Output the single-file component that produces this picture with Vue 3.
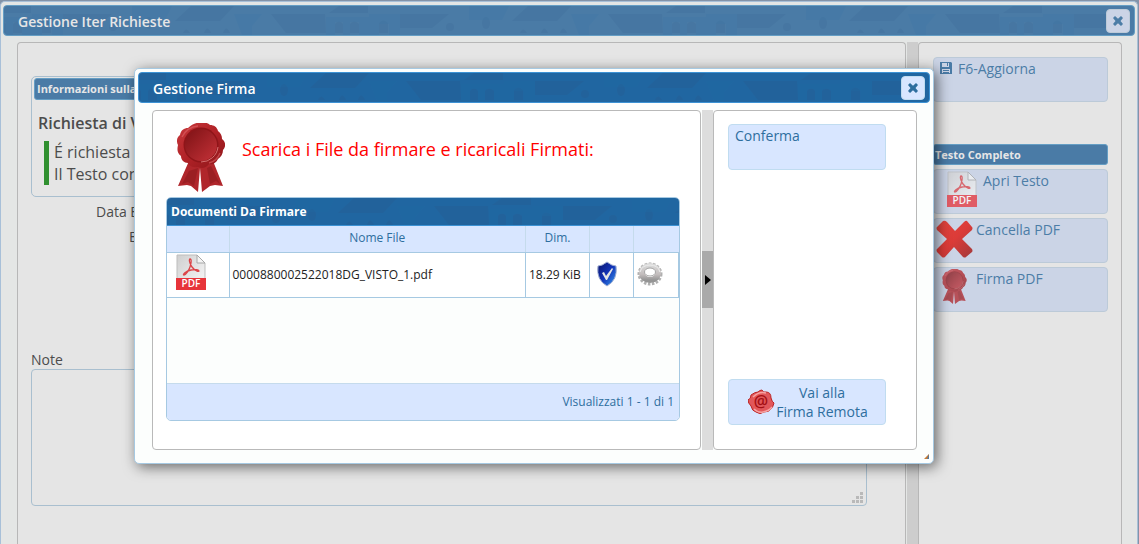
<script setup>
import { ref } from 'vue'

const note = ref('')
const documents = [{ name: '0000880002522018DG_VISTO_1.pdf', size: '18.29 KiB' }]
</script>

<template>
  <div class="page">
    <svg class="defs" aria-hidden="true">
      <defs>
        <pattern id="tiles" width="337" height="32" patternUnits="userSpaceOnUse" patternTransform="translate(-72 0)">
          <g fill="#2d5584" fill-opacity=".4">
            <path d="M2 8H56L57 27H17Z" />
            <path d="M70 0H99V7H60Z" />
            <path d="M66 27V18q4-5 8 0V27ZM81 27V18q4-5 9 0V27ZM110 27V17q4-5 9 0V27Z" />
            <path d="M131 8H180L163 22H131Z" />
            <circle cx="181" cy="21" r="4" />
            <ellipse cx="217" cy="17" rx="4" ry="6" />
            <path d="M259 0H302L288 15H243Z" />
            <path d="M251 27q3-7 7 0ZM272 27q3-9 7 0ZM291 27q3-9 7 0Z" />
          </g>
          <g fill="#1f6fa8" fill-opacity=".3">
            <path d="M57 11H100V8H131V29H120V18H110V29H90V16H81V29H74V16H66V29H57Z" />
            <path d="M200 0H240L233 14H200ZM302 8H330L320 20V29H310Z" />
          </g>
        </pattern>
        <linearGradient id="wax" x1="0" y1="0" x2="1" y2="1">
          <stop offset="0" stop-color="#c8393c" /><stop offset=".5" stop-color="#b02227" /><stop offset="1" stop-color="#8c1519" />
        </linearGradient>
        <linearGradient id="waxIn" x1="0" y1="0" x2="1" y2="1">
          <stop offset="0" stop-color="#7d1215" /><stop offset="1" stop-color="#c53238" />
        </linearGradient>
        <linearGradient id="paper" x1="0" y1="0" x2="1" y2="1">
          <stop offset="0" stop-color="#cfcfcf" /><stop offset="1" stop-color="#fafafa" />
        </linearGradient>
        <linearGradient id="shield" x1="0" y1="0" x2="1" y2="1">
          <stop offset="0" stop-color="#0a1268" /><stop offset=".5" stop-color="#1233b8" /><stop offset="1" stop-color="#3aa0ee" />
        </linearGradient>
        <linearGradient id="steel" x1="0" y1="0" x2="0" y2="1">
          <stop offset="0" stop-color="#d8d8d8" /><stop offset=".6" stop-color="#c2bcbc" /><stop offset="1" stop-color="#959595" />
        </linearGradient>
        <linearGradient id="cross" x1="0" y1="0" x2="1" y2="1">
          <stop offset="0" stop-color="#e0463f" /><stop offset=".5" stop-color="#dc3b38" /><stop offset="1" stop-color="#a23a3c" />
        </linearGradient>
        <symbol id="seal" viewBox="0 0 48 69">
          <path d="M12 38 1 63l9-1 4 1 7 6 2-24 2 24 8-6 5-1 8 1-10-25Z" fill="#b0262b" />
          <path d="m12 48-7 13 6-2 6 4 4-18ZM30 45l3 16 6-3 4 3-9-18Z" fill="#8e1a1e" opacity=".6" />
          <path d="M24 0c4-1 7 0 9 2 4 0 7 2 8 6 3 2 4 5 4 8 4 3 4 8 1 11 0 4-2 7-5 9-2 4-5 6-9 5-3 4-7 5-11 3-4 1-8 0-10-4-4 0-7-3-7-7C0 30 0 26 1 22c-2-4-1-8 2-10 1-5 4-7 8-7 4-4 9-6 13-5Z" fill="url(#wax)" />
          <path d="M5 14Q10 4 21 3M43 30q-3 8-11 10" fill="none" stroke="#dd6468" stroke-opacity=".6" stroke-width="1.500" />
          <circle cx="24" cy="22" r="17.500" fill="#8f1519" />
          <circle cx="24" cy="22" r="16" fill="url(#waxIn)" />
          <path d="M41 24A17 17 0 0 1 24 39" fill="none" stroke="#e98686" stroke-opacity=".8" />
        </symbol>
        <symbol id="pdf" viewBox="0 0 30 36">
          <path d="M1 1H21L29 9V35H1Z" fill="url(#paper)" stroke="#bdbdbd" />
          <path d="M21 1V9H29Z" fill="#f4f4f4" stroke="#a8a8a8" />
          <path d="M14 5c2 0 1 5 0 8s-4 8-6 8 2-4 7-5 8 0 8 1-4 0-7-4-3-8-2-8Z" fill="none" stroke="#dc4448" stroke-width="1.300" />
          <path d="M0 24H30V36H0Z" fill="#e7343a" />
          <text x="15" y="33" text-anchor="middle" fill="#fff" font-family="Open Sans, sans-serif" font-weight="600" font-size="10">PDF</text>
        </symbol>
        <symbol id="close" viewBox="0 0 12 12">
          <path d="M1 3 3 1 6 3.700 9 1 11 3 8.500 6 11 9 9 11 6 8.300 3 11 1 9 3.500 6Z" fill="currentColor" />
        </symbol>
      </defs>
    </svg>

    <main class="window">
      <header class="title-bar">
        <svg class="tiles" aria-hidden="true"><rect width="100%" height="100%" fill="url(#tiles)" /></svg>
        <h1>Gestione Iter Richieste</h1>
        <button class="close" aria-label="Chiudi"><svg><use href="#close" /></svg></button>
      </header>
      <div class="columns">
        <section class="panel form">
          <div class="info">
            <h2 class="legend">Informazioni sulla</h2>
            <p class="subject">Richiesta di V</p>
            <p class="quote">É richiesta<br />Il Testo con</p>
          </div>
          <div class="fields">
            <span>Data E</span>
            <span class="short">E</span>
          </div>
          <label for="note">Note</label>
          <div class="note-box">
            <textarea id="note" v-model="note"></textarea>
            <svg class="grip" viewBox="0 0 11 11" aria-hidden="true">
              <path d="M8 0h3v3H8ZM4 4h3v3H4ZM8 4h3v3H8ZM0 8h3v3H0ZM4 8h3v3H4ZM8 8h3v3H8Z" fill="#b9b9b9" />
            </svg>
          </div>
        </section>
        <div class="gutter"></div>
        <aside class="panel actions">
          <button class="btn save">
            <svg width="12" height="13" viewBox="0 0 12 13" aria-hidden="true">
              <path d="M0 0H11L12 1V12H0ZM2 1V5H9V1ZM2 7V11H10V7Z" fill="#4a7ba6" fill-rule="evenodd" />
              <path d="M7 1h1v3H7ZM3 8h6v1H3ZM3 10h6v1H3Z" fill="#4a7ba6" />
            </svg>
            <span>F6-Aggiorna</span>
          </button>
          <h2 class="legend">Testo Completo</h2>
          <button class="btn open"><svg class="soft" width="30" height="36"><use href="#pdf" /></svg><span>Apri Testo</span></button>
          <button class="btn delete">
            <svg width="37" height="38" viewBox="0 0 37 38" aria-hidden="true">
              <path d="M1 7 7 1q2-1 4 1l8 9 9-9q2-2 3-1l5 6q1 1 0 3l-10 9 10 10q1 2 0 3l-6 5q-1 1-3 0L18 27 9 37q-2 1-3 0L1 32q-1-2 0-3l10-10L1 10Q0 8 1 7Z" fill="url(#cross)" />
            </svg>
            <span>Cancella PDF</span>
          </button>
          <button class="btn sign"><svg class="soft" width="25" height="35"><use href="#seal" /></svg><span>Firma PDF</span></button>
        </aside>
      </div>
    </main>

    <section class="dialog" role="dialog" aria-labelledby="dialog-title">
      <header class="title-bar">
        <svg class="tiles" aria-hidden="true"><rect width="100%" height="100%" fill="url(#tiles)" /></svg>
        <h1 id="dialog-title">Gestione Firma</h1>
        <button class="close" aria-label="Chiudi"><svg><use href="#close" /></svg></button>
      </header>
      <div class="columns">
        <section class="panel files">
          <div class="intro">
            <svg width="48" height="69" aria-hidden="true"><use href="#seal" /></svg>
            <p>Scarica i File da firmare e ricaricali Firmati:</p>
          </div>
          <div class="grid">
            <div class="grid-title">
              <svg class="tiles" aria-hidden="true"><rect width="100%" height="100%" fill="url(#tiles)" /></svg>
              <h2>Documenti Da Firmare</h2>
            </div>
            <table>
              <colgroup><col class="c-icon" /><col /><col class="c-size" /><col class="c-act" /><col class="c-act" /></colgroup>
              <thead>
                <tr><th></th><th>Nome File</th><th>Dim.</th><th></th><th></th></tr>
              </thead>
              <tbody>
                <tr v-for="doc in documents" :key="doc.name">
                  <td class="file-icon"><svg width="30" height="36" aria-hidden="true"><use href="#pdf" /></svg></td>
                  <td>{{ doc.name }}</td>
                  <td>{{ doc.size }}</td>
                  <td class="tool">
                    <svg width="20" height="26" viewBox="0 0 20 26" aria-hidden="true">
                      <path d="M10 1q5 4 9 4 2 14-9 20Q-1 19 1 5q4 0 9-4Z" fill="url(#shield)" stroke="#9caad0" />
                      <path d="m5 12 2-1 2 4 6-8 1 1-6 11H9Z" fill="#e4e4e4" />
                    </svg>
                  </td>
                  <td class="tool">
                    <svg width="26" height="26" viewBox="0 0 26 26" aria-hidden="true">
                      <ellipse cx="13" cy="13" rx="11" ry="10" fill="none" stroke="#b0b0b0" stroke-width="3" stroke-dasharray="2.500 1.500" />
                      <ellipse cx="13" cy="12" rx="8" ry="7" fill="none" stroke="url(#steel)" stroke-width="6" />
                      <ellipse cx="13" cy="11" rx="5.500" ry="4" fill="#fff" stroke="#a5a5a5" />
                      <path d="M3 11q2-7 10-7 8 0 10 7" fill="none" stroke="#ededed" />
                    </svg>
                  </td>
                </tr>
              </tbody>
            </table>
            <div class="grid-space"></div>
            <div class="grid-foot">Visualizzati 1 - 1 di 1</div>
          </div>
        </section>
        <div class="gutter"><button class="collapse" aria-label="Comprimi"><svg width="6" height="10" viewBox="0 0 6 10"><path d="M0 0 6 5 0 10Z" /></svg></button></div>
        <aside class="panel commands">
          <button class="btn">Conferma</button>
          <button class="btn remote">
            <svg width="27" height="26" viewBox="0 0 27 26" aria-hidden="true">
              <path d="M14 1q1 3 4 2 5 0 5 6 1 4 3 5-1 4-3 6-2 3-7 3-4 3-8 0-4-1-5-6-3-3-3-6 3-1 3-5 4-3 7-3 2-2 4-2Z" fill="#e2575a" stroke="#b22" />
              <path d="M5 8q6-6 13-4M6 20q4 4 9 3 6-1 9-5" fill="none" stroke="#f6a3a3" stroke-width="1.500" />
              <text x="13" y="18" text-anchor="middle" font-family="Open Sans, sans-serif" font-weight="600" font-size="16" fill="#a40f14">@</text>
            </svg>
            <span>Vai alla<br />Firma Remota</span>
          </button>
        </aside>
      </div>
      <svg class="corner" viewBox="0 0 5 5" aria-hidden="true"><path d="M5 0V5H0Z" fill="#c77a35" /><path d="M5 0V5H3Z" fill="#557ba0" /></svg>
    </section>
  </div>
</template>

<style>
body { margin: 0; }
</style>

<style scoped>
* { box-sizing: border-box; }
h1, h2, p { margin: 0; }
button { font: inherit; cursor: pointer; }
svg { display: block; flex: none; }
.defs { position: absolute; width: 0; height: 0; }

.page {
  --bar: #4a7ba6; --bar-line: #659ec4; --line: #b7b7b7; --edge: #a9bfcf;
  --btn: #cbd4e6; --btn-line: #bccad8; --ink: #4c7da6; --gutter: #cdcdcd; --panel: #e5e5e5;
  position: relative;
  display: flex;
  min-height: 100vh;
  padding: 1px 1px 0 0;
  overflow: hidden;
  background: #8393a8;
  font-family: "Open Sans", sans-serif;
  font-size: 14px;
  line-height: 19px;
  color: #4c4c4c;
}
.window {
  flex: 1;
  display: flex;
  flex-direction: column;
  padding: 3px 2px 0;
  border: solid #a8c0d8;
  border-width: 1px 1px 0;
  border-radius: 5px 5px 0 0;
  background: #e4e6e5;
}
.title-bar {
  position: relative;
  display: flex;
  align-items: center;
  justify-content: space-between;
  height: 31px;
  padding: 0 4px 0 14px;
  border: 1px solid var(--bar-line);
  border-radius: 4px;
  background: var(--bar);
  color: #e6e6e6;
}
.title-bar h1 { position: relative; padding-top: 2px; font-size: 14px; font-weight: 600; }
.tiles { position: absolute; inset: 0; width: 100%; height: 100%; opacity: .5; }
.window .tiles { opacity: .3; }
.close {
  position: relative;
  display: grid;
  place-items: center;
  width: 24px;
  height: 24px;
  padding: 0;
  border: 1px solid var(--btn-line);
  border-radius: 4px;
  background: var(--btn);
  color: var(--ink);
}
.close svg { width: 12px; height: 12px; }
.columns { flex: 1; display: flex; }
.window .columns { padding: 6px 13px 0 14px; }
.panel { border: 1px solid var(--line); border-radius: 4px; background: var(--panel); }
.window .panel { border-bottom: 0; border-radius: 4px 4px 0 0; }
.gutter { width: 11px; margin-left: 1px; background: var(--gutter); }

.form { flex: 1; padding: 33px 38px 0 13px; }
.info { padding: 1px 2px 11px; border: 1px solid var(--edge); border-radius: 5px; }
.legend {
  height: 22px;
  padding: 0 2px;
  border: 1px solid var(--bar-line);
  border-radius: 3px;
  background: var(--bar);
  color: #e6e6e6;
  font-size: 11px;
  font-weight: 700;
  line-height: 20px;
}
.subject { padding: 12px 4px 7px; font-size: 16px; font-weight: 600; line-height: 22px; }
.quote { margin-left: 10px; padding-left: 5px; border-left: 5px solid #309030; font-size: 16px; line-height: 22px; }
.fields { display: flex; flex-direction: column; gap: 6px; padding: 5px 0 104px 65px; }
.short { padding-left: 33px; }
.form label { display: block; }
.note-box { position: relative; }
textarea {
  display: block;
  width: 100%;
  height: 137px;
  border: 1px solid var(--edge);
  border-radius: 4px;
  background: transparent;
  font: inherit;
  resize: none;
}
.grip { position: absolute; right: 4px; bottom: 3px; width: 11px; height: 11px; }

.actions { width: 204px; display: flex; flex-direction: column; gap: 4px; padding: 14px 13px 0 14px; }
.actions .legend { margin-top: 38px; padding: 0 1px; height: 21px; }
.btn {
  display: flex;
  align-items: flex-start;
  width: 100%;
  height: 46px;
  padding: 1px 6px;
  border: 1px solid var(--btn-line);
  border-radius: 4px;
  background: var(--btn);
  color: var(--ink);
  text-align: center;
}
.actions .btn { height: 45px; }
.save { gap: 6px; }
.save svg { margin-top: 3px; }
.open { gap: 6px; padding-left: 13px; }
.delete { gap: 3px; padding-left: 2px; }
.sign { gap: 9px; padding-left: 8px; }
.soft { opacity: .75; }

.dialog {
  --bar: #2066a1; --bar-line: #3c92d4; --line: #b9b9b9; --edge: #a6c9e2;
  --btn: #d8e6ff; --btn-line: #c0dcf0; --ink: #2e6e9e; --gutter: #dddddd; --panel: #ffffff;
  position: absolute;
  top: 68px;
  left: 134px;
  right: 205px;
  padding: 3px;
  border: 1px solid var(--edge);
  border-radius: 5px;
  background: #fcfefd;
  box-shadow: 3px 3px 14px rgba(0, 0, 0, .55);
}
.dialog .title-bar { color: #fff; }
.dialog .columns { padding: 7px 13px 10px 14px; }
.files { flex: 1; padding: 12px 20px 28px 13px; }
.intro { display: flex; align-items: center; gap: 17px; padding: 0 0 5px 11px; }
.intro p { padding-bottom: 16px; color: #f00; font-size: 18px; line-height: 25px; }
.grid {
  overflow: hidden;
  border: 1px solid var(--edge);
  border-radius: 5px;
  background: #fcfefd;
  font-size: 12px;
}
.grid-title { position: relative; height: 28px; border-bottom: 1px solid var(--bar-line); background: var(--bar); }
.grid-title h2 { position: relative; padding-left: 4px; color: #fff; font-size: 12px; line-height: 27px; }
table { width: 100%; table-layout: fixed; border-collapse: collapse; }
.c-icon { width: 62px; }
.c-size { width: 64px; }
.c-act { width: 44px; }
.c-act:last-child { width: 45px; }
th {
  height: 26px;
  padding: 0 0 2px;
  border-right: 1px solid #c5dbec;
  border-bottom: 1px solid var(--edge);
  background: var(--btn);
  color: var(--ink);
  font-weight: 400;
}
td {
  height: 45px;
  padding: 0 3px;
  border-right: 1px solid var(--edge);
  border-bottom: 1px solid var(--edge);
  background: #fff;
  color: #222;
  white-space: nowrap;
}
th:last-child { border-right: 0; }
.file-icon { padding: 0 0 5px 9px; }
.tool { padding: 0 3px 2px; }
.tool svg { margin-left: 4px; }
.tool:last-child svg { margin-left: 0; }
.grid-space { height: 85px; }
.grid-foot {
  height: 37px;
  padding-right: 5px;
  border-top: 1px solid #c5dbec;
  background: var(--btn);
  color: var(--ink);
  line-height: 36px;
  text-align: right;
}
.dialog .gutter { display: flex; align-items: center; }
.collapse {
  display: grid;
  place-items: center;
  width: 100%;
  height: 57px;
  padding: 0;
  border: 0;
  background: #aaa;
}
.commands { width: 204px; display: flex; flex-direction: column; justify-content: space-between; padding: 13px 30px 24px 14px; }
.remote { align-items: center; justify-content: center; gap: 1px; padding-right: 4px; }
.corner { position: absolute; right: 4px; bottom: 4px; width: 5px; height: 5px; }
</style>
